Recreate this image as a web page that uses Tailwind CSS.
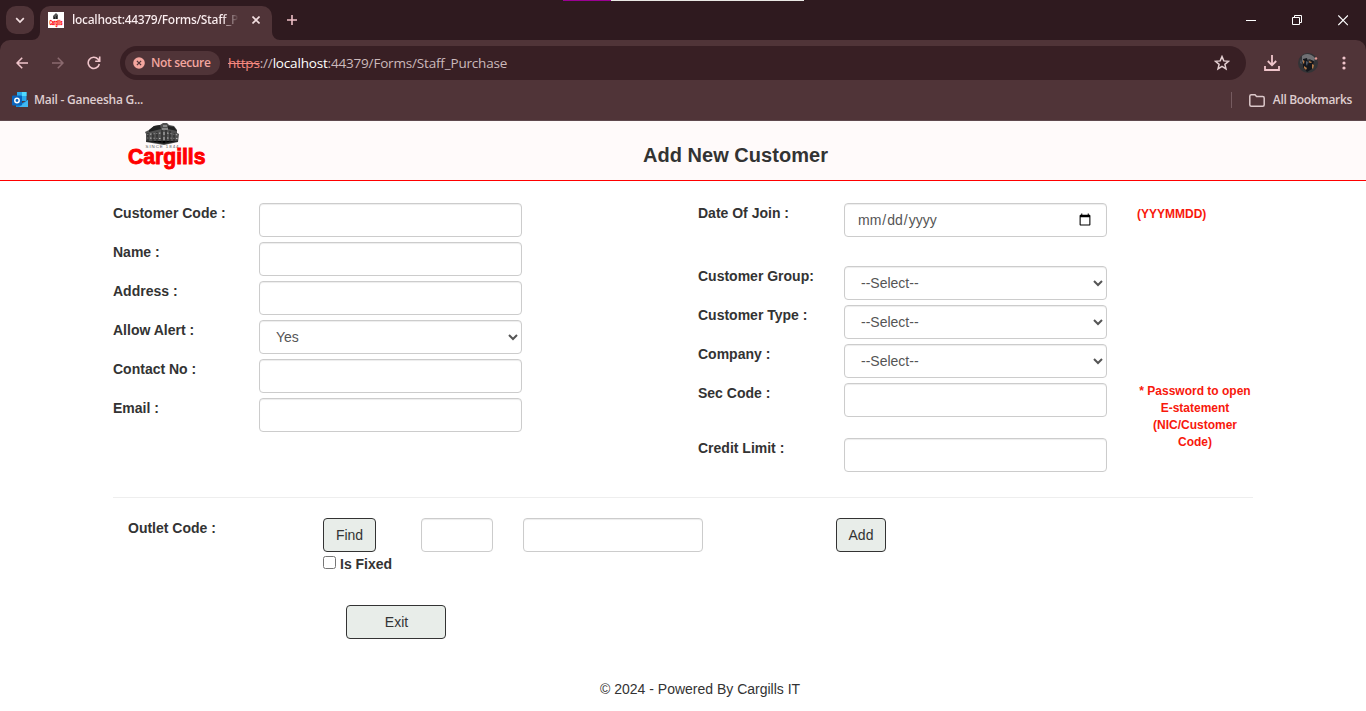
<!DOCTYPE html>
<html lang="en-US">
<head>
<meta charset="utf-8">
<title>Add New Customer</title>
<script src="https://cdn.jsdelivr.net/npm/@tailwindcss/browser@4"></script>
</head>
<body class="relative h-[711px] w-[1366px] overflow-hidden bg-white font-['Liberation_Sans',Arial,sans-serif] text-sm leading-5 text-[#333]">

<!-- Browser chrome -->
<div class="h-[121px] border-b border-[#5f484d] bg-[#2f1a1f] font-['Open_Sans','Noto_Sans',sans-serif]">
  <div class="relative flex h-10 items-start">
    <div class="absolute left-[563px] top-0 flex h-px w-[241px]"><span class="w-12 bg-[#9b0093]"></span><span class="flex-1 bg-[#e9e8e4]"></span></div>
    <button class="ml-1.5 mt-1.5 flex h-7 w-7 items-center justify-center rounded-[10px] bg-[#503438]">
      <svg width="10" height="7" viewBox="0 0 10 7" fill="none" stroke="#f3dfe1" stroke-width="1.7"><path d="M1.2 1.2 5 5l3.8-3.8"/></svg>
    </button>
    <div class="relative ml-1.5 mt-1.5 flex h-[34px] w-[232px] items-center rounded-t-[10px] bg-[#503438] pb-1.5">
      <svg class="absolute -left-2 bottom-0" width="8" height="8"><path d="M8 0v8H0a8 8 0 0 0 8-8" fill="#503438"/></svg>
      <svg class="absolute -right-2 bottom-0" width="8" height="8"><path d="M0 0v8h8a8 8 0 0 1-8-8" fill="#503438"/></svg>
      <svg class="ml-2 shrink-0" width="16" height="16" viewBox="0 0 16 16"><path fill="#fff" d="M0 0h16v16H0z"/><path fill="#555" d="M5 6V4l1-1 2-2 2 2v4H5z"/><path fill="#222" d="M6 5h1v2H6zM8 4h1v3H8z"/><text x="1.5" y="13" font-family="Liberation Sans" font-weight="bold" font-size="7" textLength="13" lengthAdjust="spacingAndGlyphs" fill="#f00" stroke="#f00" stroke-width=".3">Cargills</text></svg>
      <span class="ml-[8px] w-[167px] overflow-hidden whitespace-nowrap bg-linear-to-r from-[#fbeef0] from-90% to-transparent bg-clip-text text-[12px] font-semibold tracking-[-0.31px] text-transparent">localhost:44379/Forms/Staff_Pu</span>
      <svg class="ml-[13px] shrink-0" width="8" height="8" viewBox="0 0 8 8" stroke="#f3dfe1" stroke-width="1.6"><path d="m.5.5 7 7m0-7-7 7"/></svg>
    </div>
    <svg class="ml-[15px] mt-[15px]" width="10" height="10" viewBox="0 0 10 10" stroke="#eebfc6" stroke-width="1.6"><path d="M5 0v10M0 5h10"/></svg>
    <div class="ml-auto mr-[18px] mt-[15px] flex items-center gap-[36px] text-white">
      <svg width="10" height="11" stroke="#fff"><path d="M0 5.5h10"/></svg>
      <svg width="10" height="11" fill="none" stroke="#fff"><path d="M.5 2.5h7v7h-7zM2.5 2.5v-2h7v7h-2"/></svg>
      <svg width="10" height="11" stroke="#fff" stroke-width="1.1"><path d="m.3.5 9.6 9.6m0-9.6-9.6 9.6"/></svg>
    </div>
  </div>
  <div class="h-20 rounded-t-[10px] bg-[#503438] pt-1.5">
    <div class="flex h-[34px] items-center">
      <svg class="ml-4" width="12" height="12" viewBox="0 0 12 12" fill="none" stroke="#f0c5cb" stroke-width="1.6"><path d="M12 6H1m5.2-5.3L1 6l5.2 5.3"/></svg>
      <svg class="ml-6" width="12" height="12" viewBox="0 0 12 12" fill="none" stroke="#8b6a6f" stroke-width="1.6"><path d="M0 6h11M5.8.7 11 6l-5.2 5.3"/></svg>
      <svg class="ml-[23px]" width="14" height="14" viewBox="0 0 14 14" fill="none" stroke="#f0c5cb" stroke-width="1.6"><path d="M12.3 8A5.6 5.6 0 1 1 11 3.1L12.6 5M12.7.6V5.2H8.2"/></svg>
      <div class="ml-[19px] flex h-[34px] w-[1126px] items-center rounded-full bg-[#381f24] pl-[5px] pr-4">
        <div class="flex h-6 w-[95px] items-center rounded-full bg-[#503438] pl-2">
          <svg width="12" height="12" viewBox="0 0 12 12"><circle cx="6" cy="6" r="5.8" fill="#f4a69f"/><path d="m3.9 3.9 4.2 4.2m0-4.2L3.9 8.1" stroke="#503438" stroke-width="1.3"/></svg>
          <span class="ml-1.5 whitespace-nowrap text-[12px] font-semibold tracking-[-0.35px] text-[#f4a69f]">Not secure</span>
        </div>
        <span class="ml-2 whitespace-nowrap text-[13.5px] tracking-[-0.18px] text-[#cbb9bb]"><span class="text-[#f4887f] line-through">https</span>://<span class="text-white">localhost</span>:44379/Forms/Staff_Purchase</span>
        <svg class="ml-auto" width="16" height="16" viewBox="0 0 16 16" fill="none" stroke="#e3cfd1" stroke-width="1.5"><path d="m8 1.6 1.8 4.3 4.7.4-3.6 3 1.1 4.6L8 11.4l-4 2.5 1.1-4.6-3.6-3 4.7-.4z"/></svg>
      </div>
      <svg class="ml-[18px]" width="16" height="16" viewBox="0 0 16 16" fill="none" stroke="#f0c5cb" stroke-width="1.8"><path d="M8 0v10M3.8 6 8 10.2 12.2 6M1 11v4h14v-4"/></svg>
      <svg class="ml-[18px]" width="20" height="20" viewBox="0 0 20 20"><circle cx="10" cy="10" r="10" fill="#333336"/><path fill="#707074" d="M4 3c3-3 9-3 13 2l-1 4-4-3-4 1-4 2z"/><path fill="#14161b" d="m5 6 4-1 1 6 3-4 3 1-2 8-5 3-4-5z"/><path fill="#b37a48" d="m5 7 1.5 1L6 11l-1-1zM11 8l3 1-1 1-2-.5zM6 13l3 2-1 2-2-2zM14 11l2 1-1 4-1-1z"/><path fill="#4e5b6b" d="m8 8 2 1-1 4-1-2zM3 6l1 5-2-1z"/><circle cx="18" cy="5.5" r="1.2" fill="#e89a94"/></svg>
      <svg class="ml-[24px]" width="4" height="14" fill="#f0c5cb"><circle cx="2" cy="2" r="1.6"/><circle cx="2" cy="7" r="1.6"/><circle cx="2" cy="12" r="1.6"/></svg>
    </div>
    <div class="mt-[9px] flex h-[22px] items-center pl-3 pr-[14px] text-[12px] font-semibold text-[#dfcdcf]">
      <svg width="16" height="16" viewBox="0 0 16 16"><path fill="#28a8ea" d="M5 0h9.5v9H5z"/><path fill="#50d9ff" d="M10 0h4.5v4H10z"/><path fill="#0358a7" d="M5 4h5v4H5z"/><path fill="#1490df" d="M4 8l6 3 6-3v7H4z"/><path fill="#42b8f2" d="m16 8-9 7h9z"/><rect y="3.5" width="10" height="10" rx="1" fill="#0a64bd"/><circle cx="5" cy="8.5" r="2.2" fill="none" stroke="#fff" stroke-width="1.5"/></svg>
      <span class="ml-1.5 tracking-[-0.25px]">Mail - Ganeesha G...</span>
      <span class="ml-auto h-4 w-px bg-[#765b60]"></span>
      <svg class="ml-[17px]" width="16" height="13" viewBox="0 0 16 13" fill="none" stroke="#dcc8ca" stroke-width="1.5"><path d="M.8 2.3q0-1.5 1.5-1.5H6l1.6 1.8h6.1q1.5 0 1.5 1.5v6.6q0 1.5-1.5 1.5H2.3q-1.5 0-1.5-1.5z"/></svg>
      <span class="ml-2 tracking-[-0.33px]">All Bookmarks</span>
    </div>
  </div>
</div>

<!-- Page header -->
<header class="flex h-[60px] border-b border-[#f00] bg-[#fffafa]">
  <svg class="ml-[126px] shrink-0" width="82" height="52" viewBox="0 0 82 52">
    <path fill="#505050" d="M20 13l-1-2 4-2 5-4 6-1 3-2h4l2 2 5 1 3 4v3l2 1-1 8-14 3-18-3z"/>
    <path fill="#222" d="M23 9l5-4 6-1 1 4-12 3zM42 5l6 1 3 4-9-2z"/>
    <path stroke="#ccc" stroke-width=".9" stroke-dasharray="1.5 1.5" d="M21 13.5l14-1.5M21 17l14 .5M41 12l11 2M41 17l11 .5"/>
    <path stroke="#222" d="M22 12v8M27 12v9M31 11v10M36 9v13M40 9v13M44 10v11M48 12v8M20 20l18 2.5 14-2.5"/>
    <path stroke="#ddd" stroke-width=".8" d="M37 5h4M36 8h6M38 11v3M38 16v3"/>
    <text x="19.5" y="27.2" font-family="Liberation Sans" font-size="4.4" textLength="33" fill="#555">SINCE 1844</text>
    <text x="2" y="43.4" font-family="Liberation Sans" font-weight="bold" font-size="21.5" textLength="77.5" lengthAdjust="spacingAndGlyphs" fill="#f00" stroke="#f00" stroke-width=".9">Cargills</text>
  </svg>
  <h1 class="ml-[435px] mt-[22px] whitespace-nowrap text-[20px] font-bold leading-6 tracking-[0.03px]">Add New Customer</h1>
</header>

<main class="mx-[113px] font-bold">
  <div class="flex h-[317px] border-b border-[#eee] pt-[22px]">
    <div class="grid w-[585px] auto-rows-[34px] grid-cols-[146px_263px] content-start gap-y-[5px]">
      <label>Customer Code :</label><input class="rounded border border-[#ccc] shadow-[inset_0_1px_1px_rgba(0,0,0,0.075)]">
      <label>Name :</label><input class="rounded border border-[#ccc] shadow-[inset_0_1px_1px_rgba(0,0,0,0.075)]">
      <label>Address :</label><input class="rounded border border-[#ccc] shadow-[inset_0_1px_1px_rgba(0,0,0,0.075)]">
      <label>Allow Alert :</label><select class="rounded border border-[#ccc] bg-white px-3 py-1.5 font-normal text-[#555] shadow-[inset_0_1px_1px_rgba(0,0,0,0.075)]"><option>Yes</option></select>
      <label>Contact No :</label><input class="rounded border border-[#ccc] shadow-[inset_0_1px_1px_rgba(0,0,0,0.075)]">
      <label>Email :</label><input class="rounded border border-[#ccc] shadow-[inset_0_1px_1px_rgba(0,0,0,0.075)]">
    </div>
    <div class="grid grid-cols-[146px_263px_146px] grid-rows-[63px_39px_39px_39px_55px_34px] content-start">
      <label>Date Of Join :</label><input type="date" class="h-[34px] rounded border border-[#ccc] bg-white px-3 py-1.5 font-normal text-[#555] shadow-[inset_0_1px_1px_rgba(0,0,0,0.075)]"><span class="pl-[30px] pt-[3px] text-xs leading-[17px] text-[#f8180c]">(YYYMMDD)</span>
      <label>Customer Group:</label><select class="h-[34px] rounded border border-[#ccc] bg-white px-3 py-1.5 font-normal text-[#555] shadow-[inset_0_1px_1px_rgba(0,0,0,0.075)]"><option>--Select--</option></select><span></span>
      <label>Customer Type :</label><select class="h-[34px] rounded border border-[#ccc] bg-white px-3 py-1.5 font-normal text-[#555] shadow-[inset_0_1px_1px_rgba(0,0,0,0.075)]"><option>--Select--</option></select><span></span>
      <label>Company :</label><select class="h-[34px] rounded border border-[#ccc] bg-white px-3 py-1.5 font-normal text-[#555] shadow-[inset_0_1px_1px_rgba(0,0,0,0.075)]"><option>--Select--</option></select><span></span>
      <label>Sec Code :</label><input class="h-[34px] rounded border border-[#ccc] shadow-[inset_0_1px_1px_rgba(0,0,0,0.075)]"><span class="ml-[30px] w-[116px] text-center text-xs leading-[17px] text-[#f8180c]">* Password to open<br>E-statement<br>(NIC/Customer<br>Code)</span>
      <label>Credit Limit :</label><input class="h-[34px] rounded border border-[#ccc] shadow-[inset_0_1px_1px_rgba(0,0,0,0.075)]">
    </div>
  </div>
  <div class="flex h-[87px] items-start pl-[15px] pt-5">
    <label class="w-[195px]">Outlet Code :</label>
    <div class="w-[98px]">
      <button class="block h-[34px] w-[53px] rounded border border-[#333] bg-[#e8ede9] font-normal">Find</button>
      <label class="mt-0.5 flex items-start whitespace-nowrap"><input type="checkbox" class="mr-1 mt-0.5 h-[13px] w-[13px]">Is Fixed</label>
    </div>
    <input class="mr-[30px] h-[34px] w-[72px] rounded border border-[#ccc] shadow-[inset_0_1px_1px_rgba(0,0,0,0.075)]">
    <input class="mr-[133px] h-[34px] w-[180px] rounded border border-[#ccc] shadow-[inset_0_1px_1px_rgba(0,0,0,0.075)]">
    <button class="h-[34px] w-[50px] rounded border border-[#333] bg-[#e8ede9] font-normal">Add</button>
  </div>
  <div class="pl-[233px] pt-5">
    <button class="block h-[34px] w-[100px] rounded border border-[#333] bg-[#e8ede9] pl-px font-normal">Exit</button>
  </div>
</main>
<footer class="pl-[600px] pt-10">© 2024 - Powered By Cargills IT</footer>
</body>
</html>
